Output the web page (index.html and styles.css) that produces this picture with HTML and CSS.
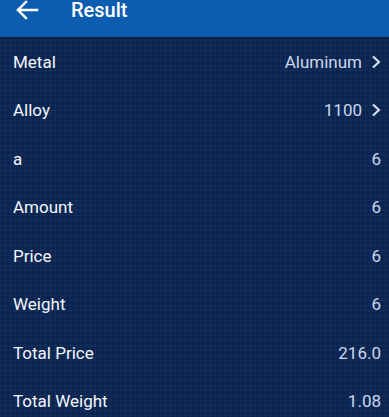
FILE: index.html
```html
<!DOCTYPE html>
<html>
<head>
<meta charset="utf-8">
<link rel="stylesheet" href="styles.css">
</head>
<body>
<div class="app">
  <header class="bar">
    <svg class="back" width="24" height="20" viewBox="0 0 24 20"><path d="M22 10H3M11 2L3 10l8 8" fill="none" stroke="#fff" stroke-width="2.4" stroke-linecap="square"/></svg>
    <span class="title">Result</span>
  </header>
  <div class="list">
    <div class="row"><span class="label">Metal</span><span class="value">Aluminum<svg class="chev" width="10" height="14" viewBox="0 0 10 14"><path d="M2 1.5l6 5.5-6 5.5" fill="none" stroke="#dfe8f5" stroke-width="2"/></svg></span></div>
    <div class="row"><span class="label">Alloy</span><span class="value">1100<svg class="chev" width="10" height="14" viewBox="0 0 10 14"><path d="M2 1.5l6 5.5-6 5.5" fill="none" stroke="#dfe8f5" stroke-width="2"/></svg></span></div>
    <div class="row"><span class="label">a</span><span class="value">6</span></div>
    <div class="row"><span class="label">Amount</span><span class="value">6</span></div>
    <div class="row"><span class="label">Price</span><span class="value">6</span></div>
    <div class="row"><span class="label">Weight</span><span class="value">6</span></div>
    <div class="row"><span class="label">Total Price</span><span class="value">216.0</span></div>
    <div class="row"><span class="label">Total Weight</span><span class="value">1.08</span></div>
  </div>
</div>
</body>
</html>
```
FILE: styles.css
```css
html, body { margin: 0; padding: 0; }
body {
  width: 389px; height: 417px; overflow: hidden;
  font-family: Roboto, "Noto Sans", sans-serif;
  background-color: #0b2550;
  background-image:
    repeating-linear-gradient(to right, rgba(90,130,190,0.08) 0 1px, transparent 1px 5px),
    repeating-linear-gradient(to bottom, rgba(90,130,190,0.08) 0 1px, transparent 1px 5px);
}
.app { display: flex; flex-direction: column; }
.bar {
  height: 37px; background: #0c5cb0;
  display: flex; align-items: flex-start;
  box-sizing: border-box; padding-left: 15px;
  box-shadow: 0 1px 2px rgba(0,0,0,0.35);
}
.title {
  color: #fff; font-size: 20px; font-weight: 500; line-height: 20px;
  margin-left: 32px;
}
.list { display: flex; flex-direction: column; padding-top: 0.5px; }
.row {
  height: 48.5px; display: flex; align-items: center; justify-content: space-between;
  padding: 0 8px 0 13px;
}
.label { color: #f4f7fc; font-size: 17px; }
.value { color: #c9d7ec; font-size: 17px; display: flex; align-items: center; }
.chev { margin-left: 9px; }
```
